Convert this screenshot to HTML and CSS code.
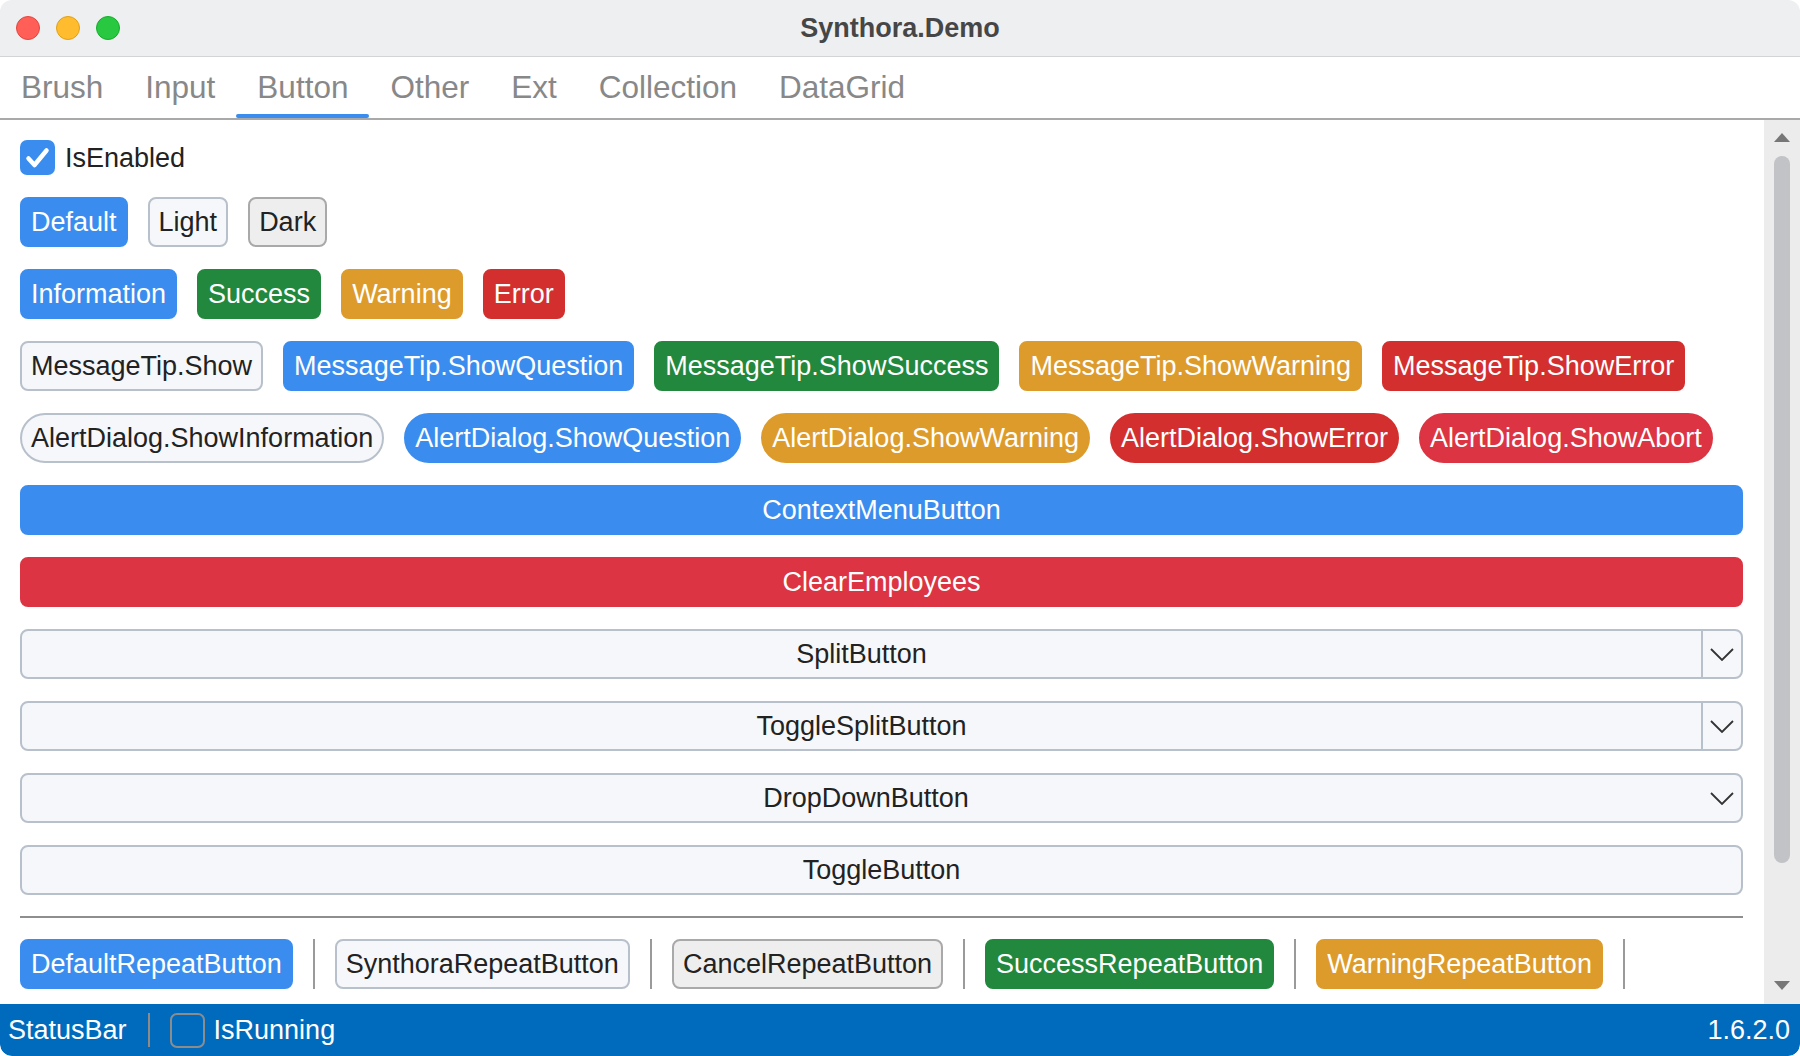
FILE: index.html
```html
<!DOCTYPE html>
<html lang="en">
<head>
<meta charset="utf-8">
<title>Synthora.Demo</title>
<link rel="stylesheet" href="styles.css">
</head>
<body>
<div class="window">
  <div class="titlebar">
    <div class="lights">
      <span class="tl tl-red"></span>
      <span class="tl tl-yellow"></span>
      <span class="tl tl-green"></span>
    </div>
    <div class="title">Synthora.Demo</div>
    <div></div>
  </div>

  <div class="tabs">
    <div class="tab">Brush</div>
    <div class="tab">Input</div>
    <div class="tab active">Button</div>
    <div class="tab">Other</div>
    <div class="tab">Ext</div>
    <div class="tab">Collection</div>
    <div class="tab">DataGrid</div>
  </div>

  <div class="main">
    <div class="content">
      <div class="check-row">
        <svg class="checkbox" width="35" height="35" viewBox="0 0 35 35">
          <rect x="0" y="0" width="35" height="35" rx="7" fill="#3a8dee"/>
          <polyline points="8.5,18.5 14.5,25 26.5,10.5" fill="none" stroke="#fff" stroke-width="4.5" stroke-linecap="round" stroke-linejoin="round"/>
        </svg>
        <span>IsEnabled</span>
      </div>

      <div class="row">
        <div class="btn primary">Default</div>
        <div class="btn soft">Light</div>
        <div class="btn dark">Dark</div>
      </div>

      <div class="row">
        <div class="btn primary">Information</div>
        <div class="btn success">Success</div>
        <div class="btn warning">Warning</div>
        <div class="btn error">Error</div>
      </div>

      <div class="row">
        <div class="btn soft">MessageTip.Show</div>
        <div class="btn primary">MessageTip.ShowQuestion</div>
        <div class="btn success">MessageTip.ShowSuccess</div>
        <div class="btn warning">MessageTip.ShowWarning</div>
        <div class="btn error">MessageTip.ShowError</div>
      </div>

      <div class="row">
        <div class="btn soft pill">AlertDialog.ShowInformation</div>
        <div class="btn primary pill">AlertDialog.ShowQuestion</div>
        <div class="btn warning pill">AlertDialog.ShowWarning</div>
        <div class="btn error pill">AlertDialog.ShowError</div>
        <div class="btn danger pill">AlertDialog.ShowAbort</div>
      </div>

      <div class="btn primary full">ContextMenuButton</div>
      <div class="btn danger full">ClearEmployees</div>

      <div class="split">
        <div class="split-main">SplitButton</div>
        <div class="split-arrow">
          <svg width="24" height="13" viewBox="0 0 24 13"><polyline points="1,1 12,12 23,1" fill="none" stroke="#333" stroke-width="1.8"/></svg>
        </div>
      </div>

      <div class="split">
        <div class="split-main">ToggleSplitButton</div>
        <div class="split-arrow">
          <svg width="24" height="13" viewBox="0 0 24 13"><polyline points="1,1 12,12 23,1" fill="none" stroke="#333" stroke-width="1.8"/></svg>
        </div>
      </div>

      <div class="split dropdown">
        <div class="split-main">DropDownButton</div>
        <svg class="dd-chevron" width="24" height="13" viewBox="0 0 24 13"><polyline points="1,1 12,12 23,1" fill="none" stroke="#333" stroke-width="1.8"/></svg>
      </div>

      <div class="btn soft full">ToggleButton</div>

      <div class="hsep"></div>

      <div class="row">
        <div class="btn primary">DefaultRepeatButton</div>
        <div class="vsep"></div>
        <div class="btn soft">SynthoraRepeatButton</div>
        <div class="vsep"></div>
        <div class="btn dark">CancelRepeatButton</div>
        <div class="vsep"></div>
        <div class="btn success">SuccessRepeatButton</div>
        <div class="vsep"></div>
        <div class="btn warning">WarningRepeatButton</div>
        <div class="vsep"></div>
      </div>
    </div>

    <div class="scrollbar">
      <div class="arrow-up"></div>
      <div class="thumb"></div>
      <div class="track-rest"></div>
      <div class="arrow-down"></div>
    </div>
  </div>

  <div class="statusbar">
    <span>StatusBar</span>
    <span class="sb-sep"></span>
    <span class="sb-check"></span>
    <span class="sb-label">IsRunning</span>
    <span class="version">1.6.2.0</span>
  </div>
</div>
</body>
</html>
```

FILE: styles.css
```css
* {
  box-sizing: border-box;
}

html,
body {
  margin: 0;
  padding: 0;
  background: #ffffff;
}

body {
  font-family: "Liberation Sans", Arial, sans-serif;
  font-size: 27px;
  color: #222222;
}

.window {
  width: 1800px;
  height: 1056px;
  display: flex;
  flex-direction: column;
  border-radius: 12px;
  overflow: hidden;
  background: #ffffff;
}

/* ---------- title bar ---------- */
.titlebar {
  height: 57px;
  flex: none;
  background: #eeeff1;
  border-bottom: 1px solid #d3d4d6;
  display: grid;
  grid-template-columns: 1fr auto 1fr;
  align-items: center;
  padding: 0 16px;
}

.lights {
  display: flex;
  gap: 16px;
}

.tl {
  width: 24px;
  height: 24px;
  border-radius: 50%;
}

.tl-red {
  background: #ff5f57;
  border: 1px solid #e2463f;
}

.tl-yellow {
  background: #febc2e;
  border: 1px solid #e1a116;
}

.tl-green {
  background: #28c840;
  border: 1px solid #14ae2a;
}

.title {
  font-size: 27px;
  font-weight: bold;
  color: #464646;
}

/* ---------- tabs ---------- */
.tabs {
  height: 63px;
  flex: none;
  display: flex;
  border-bottom: 2px solid #a9a9a9;
}

.tab {
  position: relative;
  display: flex;
  align-items: center;
  padding: 0 21px;
  font-size: 31.5px;
  color: #888888;
}

.tab.active::after {
  content: "";
  position: absolute;
  left: 0;
  right: 0;
  bottom: 0;
  height: 4px;
  border-radius: 2px;
  background: #3a8dee;
}

/* ---------- main ---------- */
.main {
  flex: 1;
  min-height: 0;
  display: flex;
}

.content {
  flex: 1;
  min-width: 0;
  overflow: hidden;
  padding: 20px 21px 0 20px;
  display: flex;
  flex-direction: column;
  gap: 22px;
}

.check-row {
  height: 35px;
  flex: none;
  display: flex;
  align-items: center;
  gap: 10px;
  color: #222222;
  padding-top: 2px;
}

.checkbox {
  display: block;
  flex: none;
  margin-top: -2px;
}

.row {
  height: 50px;
  flex: none;
  display: flex;
  gap: 20px;
}

.btn {
  height: 50px;
  flex: none;
  padding: 0 9px;
  border: 2px solid transparent;
  border-radius: 8px;
  display: flex;
  align-items: center;
  justify-content: center;
  white-space: nowrap;
  color: #ffffff;
}

.btn.primary {
  background: #3a8dee;
  border-color: #3a8dee;
}

.btn.success {
  background: #22883d;
  border-color: #22883d;
}

.btn.warning {
  background: #dd9b2b;
  border-color: #dd9b2b;
}

.btn.error {
  background: #d32f2f;
  border-color: #d32f2f;
}

.btn.danger {
  background: #dc3442;
  border-color: #dc3442;
}

.btn.soft {
  background: #f5f7fa;
  border-color: #b7c0cb;
  color: #222222;
}

.btn.dark {
  background: #eeeeee;
  border-color: #a9a9a9;
  color: #222222;
}

.btn.pill {
  border-radius: 25px;
}

.btn.full {
  width: 100%;
}

.split {
  height: 50px;
  flex: none;
  display: flex;
  background: #f5f7fa;
  border: 2px solid #b7c0cb;
  border-radius: 8px;
  color: #222222;
}

.split-main {
  flex: 1;
  display: flex;
  align-items: center;
  justify-content: center;
  white-space: nowrap;
}

.split-arrow {
  width: 40px;
  flex: none;
  border-left: 2px solid #b7c0cb;
  display: flex;
  align-items: center;
  justify-content: center;
}

.split-arrow svg,
.dd-chevron {
  display: block;
}

.dropdown {
  align-items: center;
  padding-right: 7px;
}

.dropdown .split-main {
  align-self: stretch;
}

.hsep {
  height: 2px;
  flex: none;
  background: #8e8e8e;
  margin: -1px 0 -1px;
}

.vsep {
  width: 2px;
  flex: none;
  background: #9a9a9a;
}

/* ---------- scrollbar ---------- */
.scrollbar {
  width: 36px;
  flex: none;
  background: #ececec;
  display: flex;
  flex-direction: column;
  align-items: center;
  padding: 13px 0 14px;
}

.arrow-up {
  width: 0;
  height: 0;
  border-left: 8px solid transparent;
  border-right: 8px solid transparent;
  border-bottom: 9px solid #777777;
}

.thumb {
  width: 16px;
  height: 707px;
  margin-top: 14px;
  border-radius: 8px;
  background: #c2c3c7;
}

.track-rest {
  flex: 1;
}

.arrow-down {
  width: 0;
  height: 0;
  border-left: 8px solid transparent;
  border-right: 8px solid transparent;
  border-top: 9px solid #777777;
}

/* ---------- status bar ---------- */
.statusbar {
  height: 52px;
  flex: none;
  background: #006bbd;
  color: #ffffff;
  display: flex;
  align-items: center;
  padding: 0 10px 0 8px;
  border-radius: 0 0 12px 12px;
}

.sb-sep {
  width: 2px;
  height: 34px;
  background: #8f8a86;
  margin: 0 20px 0 21px;
}

.sb-check {
  width: 35px;
  height: 35px;
  border: 2px solid #8c8c8c;
  border-radius: 7px;
  margin-right: 9px;
}

.version {
  margin-left: auto;
}
```
